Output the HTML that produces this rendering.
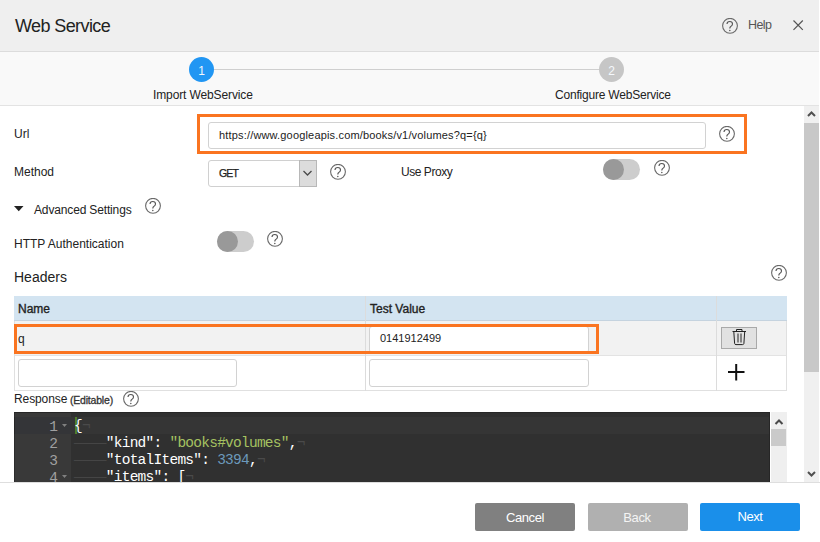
<!DOCTYPE html>
<html><head><meta charset="utf-8">
<style>
*{margin:0;padding:0;box-sizing:border-box}
html,body{width:820px;height:542px;overflow:hidden;background:#fff;font-family:"Liberation Sans",sans-serif;color:#333}
.a{position:absolute}
.t{position:absolute;white-space:nowrap;line-height:1}
#hdr{left:0;top:0;width:819px;height:52px;background:#efefef;border-bottom:1px solid #dcdcdc}
#step{left:0;top:52px;width:819px;height:54px;background:#f9f9f9;border-bottom:1px solid #e3e3e3}
.circ{position:absolute;width:25px;height:25px;border-radius:50%;color:#f4f8fc;font-size:12px;text-align:center;line-height:28px}
.help{position:absolute;width:17px;height:17px}
.inp{position:absolute;background:#fff;border:1px solid #d2d2d2;border-radius:3px}
.tog{position:absolute;width:37px;height:21px;border-radius:11px;background:#cdcdcd}
.tog i{position:absolute;left:0;top:0;width:21px;height:21px;border-radius:50%;background:#999}
.btn{position:absolute;top:503px;height:28px;width:100px;border-radius:2px;color:#fff;font-size:13px;text-align:center;line-height:28px;letter-spacing:-0.4px}
</style></head><body>
<svg width="0" height="0" style="position:absolute">
<defs>
<symbol id="q" viewBox="0 0 17 17">
<circle cx="8" cy="7.8" r="7.4" fill="none" stroke="#6a6a6a" stroke-width="1.1"/>
<path d="M5 6.1C5 4.4 6.2 3.5 7.8 3.5C9.4 3.5 10.5 4.5 10.5 5.9C10.5 7.3 9.5 7.9 8.7 8.5C8 9 7.8 9.5 7.8 10.6" fill="none" stroke="#555" stroke-width="1.1"/>
<circle cx="7.8" cy="12.4" r="0.75" fill="#555"/>
</symbol>
</defs></svg>

<div id="hdr" class="a"></div>
<div class="t" style="left:15px;top:17px;font-size:18px;color:#222;letter-spacing:-0.6px">Web Service</div>
<svg class="help" style="left:721.5px;top:18px"><use href="#q"/></svg>
<div class="t" style="left:748px;top:19px;font-size:12.5px;color:#555;letter-spacing:-0.6px">Help</div>
<svg class="a" style="left:792px;top:19px" width="12" height="12" viewBox="0 0 12 12"><path d="M1.5 1.5L10.8 10.8M10.8 1.5L1.5 10.8" stroke="#555" stroke-width="1.2"/></svg>

<div id="step" class="a"></div>
<div class="a" style="left:213px;top:69px;width:386px;height:1px;background:#cfcfcf"></div>
<div class="circ" style="left:189px;top:57px;background:#2196f3">1</div>
<div class="circ" style="left:599px;top:57px;background:#c6c6c6">2</div>
<div class="t" style="left:153px;top:89px;font-size:12px;color:#222;letter-spacing:-0.12px">Import WebService</div>
<div class="t" style="left:555px;top:89px;font-size:12px;color:#222;letter-spacing:-0.2px">Configure WebService</div>

<!-- form -->
<div class="t" style="left:14px;top:128px;font-size:12px;color:#222">Url</div>
<div class="a" style="left:197px;top:114px;width:550px;height:40px;border:3px solid #fa7420"></div>
<div class="inp" style="left:208px;top:122px;width:498px;height:27px"></div>
<div class="t" style="left:219px;top:130px;font-size:11px;color:#222;letter-spacing:0.17px">https://www.googleapis.com/books/v1/volumes?q={q}</div>
<svg class="help" style="left:718.5px;top:125.5px"><use href="#q"/></svg>

<div class="t" style="left:14px;top:166px;font-size:12px;color:#222">Method</div>
<div class="inp" style="left:208px;top:160px;width:109px;height:27px;border-color:#d0d0d0"></div>
<div class="a" style="left:299px;top:160px;width:18px;height:27px;background:#dcdcdc;border:1px solid #b8b8b8"></div>
<svg class="a" style="left:302px;top:168px" width="12" height="10" viewBox="0 0 12 10"><path d="M1.5 3L5.5 7L9.5 3" fill="none" stroke="#4a4a4a" stroke-width="1.3"/></svg>
<div class="t" style="left:219px;top:168px;font-size:10.5px;color:#222;letter-spacing:-0.8px;-webkit-text-stroke:0.25px #222">GET</div>
<svg class="help" style="left:329.5px;top:163.5px"><use href="#q"/></svg>

<div class="t" style="left:401px;top:166px;font-size:12px;color:#222;letter-spacing:-0.45px">Use Proxy</div>
<div class="tog" style="left:603px;top:159px"><i></i></div>
<svg class="help" style="left:653.5px;top:159.5px"><use href="#q"/></svg>

<svg class="a" style="left:14px;top:206px" width="10" height="6" viewBox="0 0 10 6"><path d="M0 0H9.5L4.75 5.3Z" fill="#222"/></svg>
<div class="t" style="left:34px;top:204px;font-size:12px;color:#222;letter-spacing:-0.15px">Advanced Settings</div>
<svg class="help" style="left:145px;top:198px"><use href="#q"/></svg>

<div class="t" style="left:14px;top:238px;font-size:12px;color:#222">HTTP Authentication</div>
<div class="tog" style="left:217px;top:231px"><i></i></div>
<svg class="help" style="left:267px;top:231px"><use href="#q"/></svg>

<div class="t" style="left:14px;top:270px;font-size:14px;color:#222">Headers</div>
<svg class="help" style="left:771px;top:265px"><use href="#q"/></svg>

<!-- table -->
<div class="a" style="left:14px;top:296px;width:773px;height:95px;border:1px solid #e0e0e0;border-top:0"></div>
<div class="a" style="left:14px;top:296px;width:773px;height:25px;background:#d3e4f1;border-bottom:1px solid #c5d3df"></div>
<div class="a" style="left:15px;top:321px;width:771px;height:35px;background:#f2f2f2;border-bottom:1px solid #e3e3e3"></div>
<div class="a" style="left:365px;top:296px;width:1px;height:95px;background:#dcdcdc"></div>
<div class="a" style="left:716px;top:296px;width:1px;height:95px;background:#dcdcdc"></div>
<div class="t" style="left:18px;top:303px;font-size:12px;color:#222;-webkit-text-stroke:0.35px #222;letter-spacing:0px">Name</div>
<div class="t" style="left:370px;top:303px;font-size:12px;color:#222;-webkit-text-stroke:0.35px #222;letter-spacing:0px">Test Value</div>
<div class="inp" style="left:369px;top:326px;width:220px;height:27px"></div>
<div class="a" style="left:14px;top:324px;width:585px;height:30px;border:3px solid #fa7420"></div>
<div class="t" style="left:18px;top:333px;font-size:12px;color:#222">q</div>
<div class="t" style="left:380px;top:333px;font-size:11px;color:#222">0141912499</div>
<div class="a" style="left:721px;top:327px;width:36px;height:22px;background:#e1e1e1;border:1px solid #a9a9a9"></div>
<svg class="a" style="left:731px;top:328px" width="17" height="18" viewBox="0 0 17 18"><path d="M1.5 3.5H15M5.5 3.5V1.5H11V3.5M2.8 3.5L3.6 15.5Q3.8 16.6 5 16.6H11.5Q12.7 16.6 12.9 15.5L13.7 3.5M7 5.5V14.5M10 5.5V14.5" fill="none" stroke="#222" stroke-width="1"/></svg>
<div class="inp" style="left:18px;top:359px;width:219px;height:28px"></div>
<div class="inp" style="left:369px;top:359px;width:220px;height:28px"></div>
<svg class="a" style="left:728px;top:364px" width="17" height="17" viewBox="0 0 17 17"><path d="M0 8H16.5M8.2 0V16.5" stroke="#111" stroke-width="2"/></svg>

<div class="t" style="left:14px;top:393px;font-size:12px;color:#222;letter-spacing:-0.1px">Response</div>
<div class="t" style="left:70px;top:395px;font-size:10.5px;color:#333;-webkit-text-stroke:0.3px #333;letter-spacing:-0.2px">(Editable)</div>
<svg class="help" style="left:122.5px;top:390.5px"><use href="#q"/></svg>

<!-- editor -->
<div class="a" style="left:14px;top:412px;width:756px;height:70px;background:#303030;overflow:hidden;font-family:'Liberation Mono',monospace;font-size:14.5px;line-height:17px;border-top:1px solid #262626;border-right:1px solid #262626">
<div class="a" style="left:0;top:0;width:57px;height:70px;background:#393939;border-left:1px solid #2c2c2c"></div>
<div class="a" style="left:0;top:4px;width:57px;height:17px;background:#343538;border-left:1px solid #262626"></div>
<div class="a" style="left:57px;top:4px;width:700px;height:17px;background:#353535"></div>
<div class="a" style="left:61px;top:4px;width:2px;height:17px;background:#4f7f2c"></div>
<div class="a" style="left:0;top:6px;width:57px;color:#a0a0a0">
<div style="height:17px;position:relative"><span class="a" style="right:13px">1</span></div>
<div style="height:17px;position:relative"><span class="a" style="right:13px">2</span></div>
<div style="height:17px;position:relative"><span class="a" style="right:13px">3</span></div>
<div style="height:17px;position:relative"><span class="a" style="right:13px">4</span></div>
</div>
<svg class="a" style="left:48px;top:11px" width="5" height="3" viewBox="0 0 5 3"><path d="M0 0H5L2.5 3Z" fill="#808080"/></svg>
<svg class="a" style="left:48px;top:62px" width="5" height="3" viewBox="0 0 5 3"><path d="M0 0H5L2.5 3Z" fill="#808080"/></svg>
<div class="a" style="left:60px;top:5px;color:#fff;white-space:pre;letter-spacing:-0.75px"><div style="height:17px">{<span style="color:#4a4a4a">&#172;</span></div><div style="height:17px"><span style="color:#454545;position:relative;left:0px">&#8212;&#8212;&#8212;&#8212;</span>"kind": <span style="color:#a5c261">"books#volumes"</span>,<span style="color:#4a4a4a">&#172;</span></div><div style="height:17px"><span style="color:#454545;position:relative;left:0px">&#8212;&#8212;&#8212;&#8212;</span>"totalItems": <span style="color:#6c99bb">3394</span>,<span style="color:#4a4a4a">&#172;</span></div><div style="height:17px"><span style="color:#454545;position:relative;left:0px">&#8212;&#8212;&#8212;&#8212;</span>"items": [<span style="color:#4a4a4a">&#172;</span></div></div>
</div>
<div class="a" style="left:771px;top:412px;width:16px;height:70px;background:#efefef"></div>
<div class="a" style="left:771px;top:429px;width:15px;height:17px;background:#cacaca"></div>
<svg class="a" style="left:773px;top:415px" width="12" height="12" viewBox="0 0 12 12"><path d="M2.5 9L6 5.5L9.5 9" fill="none" stroke="#4a4a4a" stroke-width="2"/></svg>

<!-- scrollbars -->
<div class="a" style="left:804px;top:106px;width:15px;height:376px;background:#f0f0f0"></div>
<div class="a" style="left:804px;top:123px;width:15px;height:249px;background:#c8c8c8"></div>
<svg class="a" style="left:804px;top:106px" width="15" height="17" viewBox="0 0 15 17"><path d="M4 10L7.5 6.5L11 10" fill="none" stroke="#505050" stroke-width="2"/></svg>
<svg class="a" style="left:804px;top:465px" width="15" height="17" viewBox="0 0 15 17"><path d="M4 7L7.5 10.5L11 7" fill="none" stroke="#505050" stroke-width="2"/></svg>

<!-- footer -->
<div class="a" style="left:0;top:482px;width:820px;height:60px;background:#fff;border-top:1px solid #dedede"></div>
<div class="btn" style="left:475px;background:#808080;padding-top:1px">Cancel</div>
<div class="btn" style="left:588px;background:#b0b0b0;padding-top:1px;padding-right:2px;color:#f4f4f4">Back</div>
<div class="btn" style="left:700px;background:#1a8fea">Next</div>
</body></html>
